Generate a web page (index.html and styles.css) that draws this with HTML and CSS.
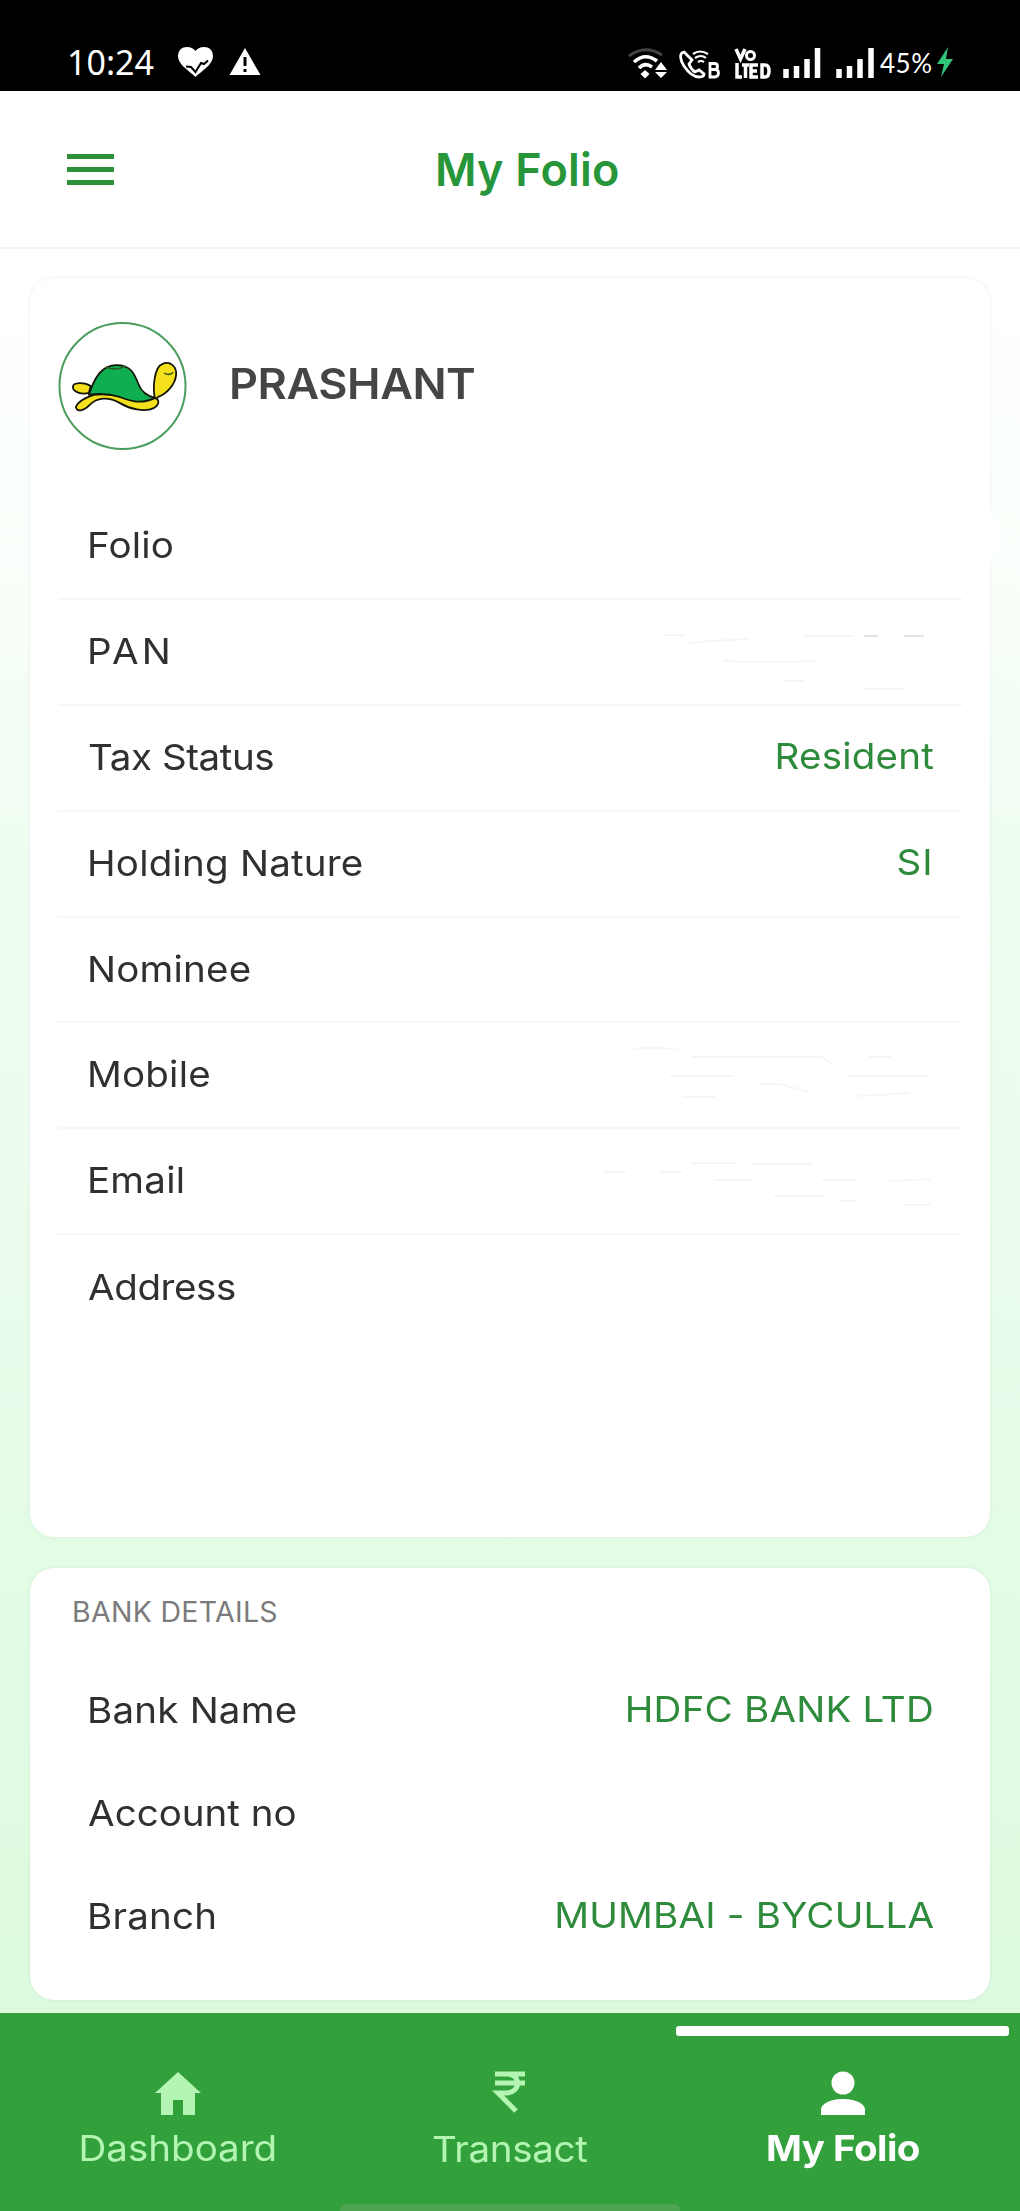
FILE: index.html
```
<!DOCTYPE html>
<html lang="en">
<head>
<meta charset="utf-8">
<title>My Folio</title>
<link rel="stylesheet" href="styles.css">
</head>
<body>
<div class="screen">
  <div class="status">
    <span class="clock">10:24</span>
    <svg class="status-left" width="84" height="32" viewBox="0 0 84 32">
      <path d="M18.500 31C14 26 1 19 1 10.500C1 4 5 1 10 1C14 1 17 3 18.500 5C20 3 23 1 27 1C32 1 36 4 36 10.500C36 19 23 26 18.500 31Z" fill="#fff"/>
      <path d="M9 20.500l5 .5 4.500 5L24 17l3 1 4-3.500" fill="none" stroke="#000" stroke-width="2"/>
      <path d="M68 2L83.500 29H52.500Z" fill="#fff"/>
      <path d="M68 11v9M68 23v3" stroke="#000" stroke-width="3"/>
    </svg>
    <svg class="status-right" width="196" height="36" viewBox="0 0 196 36" fill="none" stroke="#fff">
      <path d="M1 9Q17 -3 34 8" stroke="#444" stroke-width="3"/>
      <path d="M6 15Q17 5 29 14M11 21Q17 15 24 20" stroke-width="3.600"/>
      <path d="M17 23l4.500 4-4.500 4.500-4.500-4.500z" fill="#fff" stroke="none"/>
      <path d="M33 15l6 8H27zM33 31l6-6H27z" fill="#fff" stroke="none"/>
      <path d="M56 5c-5 1-4 8 0 14s10 11 15 11c3 0 5-1 5-3l-5-4-4 2c-3-2-5-5-6-8l3-4z" stroke-width="2.800"/>
      <path d="M65 7Q72 2 80 7M67 11Q73 7 78 11M70 15Q73 13 76 15" stroke-width="2.200"/>
      <path d="M82 16.500h4.500q3 0 3 3t-3 3H82zM82 22.500h5q3.500 0 3.500 3.500t-3.500 4H82z" stroke-width="2.800"/>
      <path d="M108 2l4.500 10L117 2" stroke-width="3.500"/>
      <circle cx="122.500" cy="8.500" r="4" stroke-width="3"/>
      <path d="M109 16v14h5M114 18h7M117.500 18v13M130 18h-7v12h7M123 24h6M134 18h3q4 0 4 6t-4 6h-3z" stroke-width="3.500"/>
      <path d="M158 22v9M168.500 19v12M179 12v19M189.500 1v30" stroke-width="5.500"/>
    </svg>
    <svg class="signal" width="40" height="32" viewBox="0 0 40 32">
      <path d="M3 22v9M13.500 19v12M24 12v19M35 1v30" stroke="#fff" stroke-width="5.500"/>
    </svg>
    <span class="battery">45%</span>
    <svg class="bolt" width="18" height="32" viewBox="0 0 18 32"><path d="M12 1L1 18h7L5 31L17 13h-7z" fill="#2fc47a"/></svg>
  </div>

  <header class="topbar">
    <svg class="menu" width="47" height="33" viewBox="0 0 47 33"><path d="M0 3.500h47M0 16.500h47M0 29.500h47" stroke="#2d9138" stroke-width="5"/></svg>
    <h1 class="title">My Folio</h1>
  </header>

  <main class="content">
    <section class="card profile">
      <div class="smudge"></div>
      <div class="person">
        <svg class="avatar" width="129" height="130" viewBox="0 0 130 130">
          <circle cx="65" cy="65" r="63.500" fill="#fff" stroke="#4b9d5d" stroke-width="2"/>
          <g stroke="#141408" stroke-width="1.800" stroke-linejoin="round">
            <path d="M31 72C24 74 15 71 15 66C15 61 27 61 33 65Z" fill="#f5e01c"/>
            <path d="M98 79C95 67 97 46 105 43C113 39 120 46 119 54C118 64 109 73 101 76Z" fill="#f5e01c"/>
            <path d="M36 74C27 77 20 81 18 86C19 92 26 90 32 84C39 77 50 75 62 82C72 88 87 92 97 87C103 83 102 78 97 77C80 82 58 70 36 74Z" fill="#f5e01c"/>
            <path d="M31 74C37 56 44 44 59 44C73 44 77 52 81 63C84 71 89 75 98 77C83 84 73 80 62 76C52 73 42 72 31 74Z" fill="#0fae51"/>
          </g>
          <path d="M107 52q6 3 9-1M48 46q10 4 20-1" fill="none" stroke="#31561b" stroke-width="1.500"/>
        </svg>
        <h2 class="name">PRASHANT</h2>
      </div>
      <dl class="rows">
        <div class="row"><dt>Folio</dt><dd></dd></div>
        <div class="row"><dt class="wide">PAN</dt><dd class="hidden-value">
          <svg width="270" height="80" viewBox="0 0 270 80"><path d="M0 25h20M25 33q20-2 60-4M60 51q40 2 90 0M140 26h50M120 71h20M200 79h40" stroke="#f6f6f6" stroke-width="2" fill="none"/><path d="M200 26h14M240 26h20" stroke="#e4e4e4" stroke-width="2"/></svg></dd></div>
        <div class="row"><dt class="tight">Tax Status</dt><dd>Resident</dd></div>
        <div class="row"><dt>Holding Nature</dt><dd class="si">SI</dd></div>
        <div class="row"><dt>Nominee</dt><dd></dd></div>
        <div class="row"><dt>Mobile</dt><dd class="hidden-value">
          <svg width="300" height="80" viewBox="0 0 300 80"><path d="M0 16q20-3 45 1M58 24h130l12 8M235 24h22M36 43h64M125 51h20l30 8M213 43h82M225 63l50-3M48 64h33" stroke="#f6f6f6" stroke-width="2" fill="none"/></svg></dd></div>
        <div class="row"><dt>Email</dt><dd class="hidden-value">
          <svg width="330" height="80" viewBox="0 0 330 80"><path d="M0 33h22M56 33h22M88 24h44M148 25h60M110 41h38M170 57h50M218 41h34M286 42l41-2M300 66h27M235 62h18" stroke="#f6f6f6" stroke-width="2" fill="none"/></svg></dd></div>
        <div class="row"><dt class="tight">Address</dt><dd></dd></div>
      </dl>
    </section>

    <section class="card bank">
      <h3 class="section-title">BANK DETAILS</h3>
      <dl class="rows compact">
        <div class="row"><dt>Bank Name</dt><dd>HDFC BANK LTD</dd></div>
        <div class="row"><dt class="snug">Account no</dt><dd></dd></div>
        <div class="row"><dt>Branch</dt><dd>MUMBAI - BYCULLA</dd></div>
      </dl>
    </section>
  </main>

  <nav class="tabs">
    <a class="tab dashboard">
      <svg width="46" height="46" viewBox="0 0 46 46"><path d="M23 1L46 22h-6v22H28V29H18v15H6V22H0z" fill="#b4f5b4"/></svg>
      <span>Dashboard</span>
    </a>
    <a class="tab transact">
      <svg width="46" height="46" viewBox="0 0 46 46" fill="none" stroke="#b4f5b4" stroke-width="5"><path d="M8 5h30M8 14h30M12 5h8c14 0 14 18 0 19H11l18 18"/></svg>
      <span>Transact</span>
    </a>
    <a class="tab active">
      <svg width="46" height="46" viewBox="0 0 46 46"><ellipse cx="23" cy="12" rx="11.500" ry="11.500" fill="#fff"/><path d="M1 44v-5C1 31 14 28 23 28s22 3 22 11v5z" fill="#fff"/></svg>
      <span>My Folio</span>
    </a>
    <div class="gesture"></div>
  </nav>
</div>
</body>
</html>
```
FILE: styles.css
```
* { box-sizing: border-box; margin: 0; padding: 0; }

body { font-family: Inter, "Liberation Sans", sans-serif; background: #fff; color: #303030; }

svg { display: block; flex: none; }

.screen { width: 1020px; height: 2211px; display: flex; flex-direction: column; overflow: hidden; }

.status { height: 91px; flex: none; background: #000; color: #fff; display: flex; align-items: flex-start; padding: 46px 0 0 67px; }
.clock { width: 110px; font: 400 34px/32px "Noto Sans", sans-serif; }
.status-left { width: 84px; }
.status-right { margin-left: 367px; margin-top: 1px; }
.signal { margin: 1px 0 0 12px; }
.battery { width: 56px; margin-left: 4px; font: 400 26px/34px Lato, sans-serif; letter-spacing: 0.5px; }

.topbar { height: 158px; flex: none; display: flex; align-items: center; padding: 0 67px; border-bottom: 2px solid #f4f4f4; background: #fff; }
.title { margin-left: 321px; font-size: 45px; font-weight: 600; letter-spacing: 0.2px; color: #27963a; }

.content { height: 1764px; flex: none; display: flex; flex-direction: column; gap: 31px; padding: 29px 30px 0; background: linear-gradient(#fff 0, #f9fffa 18%, #f0fdf1 33%, #eafbec 58%, #e2fce5 75%, #dcfae0 100%); }

.card { position: relative; background: #fff; border-radius: 24px; box-shadow: 0 0 3px rgba(60, 90, 60, 0.13); }
.profile { height: 1259px; padding: 43px 28px 0; }
.bank { height: 432px; padding: 24px 28px 0; }

.smudge { position: absolute; right: -10px; top: 232px; width: 20px; height: 52px; border-radius: 50%; background: #fff; filter: blur(4px); }

/* Labels are set slightly extended to get a wide, rounded look. */
.name, .row dt, .tab span { transform: scaleX(1.07); transform-origin: left; }
.row dd { transform: scaleX(1.07); transform-origin: right; }

.person { height: 173px; display: flex; align-items: flex-start; }
.name { margin: 37px 0 0 42px; font-size: 42px; line-height: 52px; font-weight: 600; letter-spacing: -0.4px; color: #454545; }

.row { height: 105.9px; display: flex; justify-content: space-between; align-items: center; padding: 0 28px 2px 29px; border-bottom: 2px solid #f7f7f7; font-size: 36px; line-height: 44px; letter-spacing: 0.2px; }
.row:last-child { border-bottom: 0; }
.row dd { color: #2e8b3b; position: relative; top: -1px; }
.row .hidden-value { transform: none; }
.row .wide { letter-spacing: 3px; }
.row .tight { letter-spacing: -0.4px; padding-left: 1px; }
.row .snug { letter-spacing: 0; padding-left: 1px; }
.row .si { letter-spacing: 1px; }

.section-title { padding-left: 14px; font-size: 28.5px; line-height: 40px; font-weight: 400; letter-spacing: 0.3px; color: #7b7b7b; }
.compact { margin-top: 27px; }
.compact .row { height: 103px; border: 0; }

.tabs { position: relative; flex: none; height: 198px; display: grid; grid-template-columns: 344px 332px 344px; background: #32a13c; }
.tab { display: flex; flex-direction: column; align-items: center; padding: 58px 0 0; font-size: 36px; line-height: 44px; letter-spacing: 0; color: #b4f5b4; }
.tab span { margin-top: 9px; transform-origin: center; }
.dashboard { padding-left: 12px; }
.transact { letter-spacing: -0.3px; }
.tab.transact svg { margin-top: -2px; margin-bottom: 3px; }
.active { position: relative; padding-right: 10px; font-weight: 700; letter-spacing: -0.5px; color: #fff; }
.active::before { content: ""; position: absolute; left: 0; top: 13px; width: 333px; height: 10px; border-radius: 3px; background: #fff; }
.gesture { position: absolute; left: 340px; bottom: 0; width: 340px; height: 7px; border-radius: 6px 6px 0 0; background: #4da452; }
```
